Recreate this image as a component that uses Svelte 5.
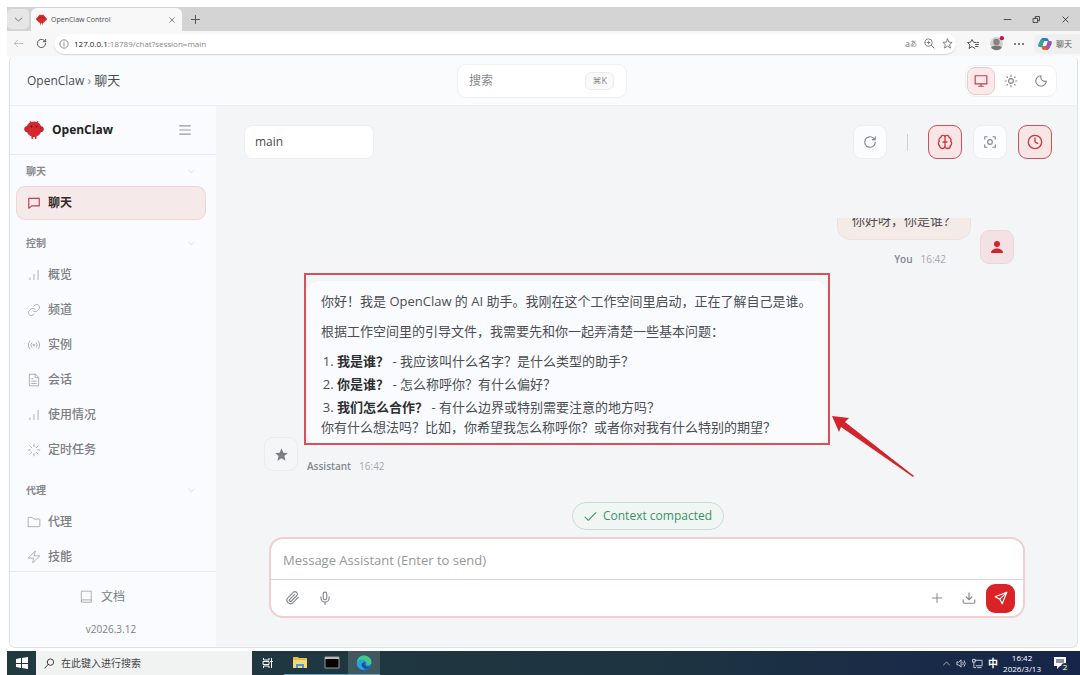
<script>
  let session = 'main'
  let draft = ''
  let address = '127.0.0.1:18789/chat?session=main'
  let theme = 'system'

  const icons = {
    chat: 'M3 4h18v13H8l-5 4z',
    bars: 'M5 20v-3M12 20v-9M19 20V4',
    link: 'M10 13a5 5 0 0 0 7.5.5l3-3a5 5 0 0 0-7-7l-1.800 1.700M14 11a5 5 0 0 0-7.500-.5l-3 3a5 5 0 0 0 7 7l1.700-1.700',
    radio: 'M5 19a10 10 0 0 1 0-14M19 5a10 10 0 0 1 0 14M8 16a6 6 0 0 1 0-8M16 8a6 6 0 0 1 0 8M10.500 12a1.500 1.500 0 1 0 3 0 1.500 1.500 0 1 0-3 0',
    file: 'M14 2H4v20h16V8zM14 2v6h6M8 10h2M8 14h8M8 18h8',
    loader: 'M12 2v4M12 18v4M2 12h4M18 12h4M5 5l3 3M16 16l3 3M5 19l3-3M16 8l3-3',
    folder: 'M2 19V5a1 1 0 0 1 1-1h6l3 3h9a1 1 0 0 1 1 1v11a1 1 0 0 1-1 1H3a1 1 0 0 1-1-1z',
    zap: 'M14 2 2 14h9l-1 8 12-12h-9z',
    book: 'M4 19V2h17v19H6a2 2 0 0 1 0-4h15',
    menu: 'M3 5h18M3 12h18M3 19h18',
    chevron: 'M3 8l9 8 9-8',
    monitor: 'M2 3h20v14H2zM8 21h8M12 17v4',
    sun: 'M8 12a4 4 0 1 0 8 0 4 4 0 1 0-8 0M12 2v2M12 20v2M2 12h2M20 12h2M5 5l1 1M18 18l1 1M5 19l1-1M18 6l1-1',
    moon: 'M12 3a7 7 0 0 0 9 9 9 9 0 1 1-9-9z',
    refresh: 'M21 12a9 9 0 1 1-3-6.700L21 8M21 3v5h-5',
    brain: 'M12 5a3 3 0 0 0-6 0 4 4 0 0 0-2.500 6 4 4 0 0 0 .5 6.500A4 4 0 0 0 12 18zM12 5a3 3 0 0 1 6 0 4 4 0 0 1 2.500 6 4 4 0 0 1-.5 6.500A4 4 0 0 1 12 18zM9 12h6',
    focus: 'M8 12a4 4 0 1 0 8 0 4 4 0 1 0-8 0M3 7V3h4M17 3h4v4M21 17v4h-4M7 21H3v-4',
    clock: 'M2 12a10 10 0 1 0 20 0 10 10 0 1 0-20 0M12 6v6l4 2',
    clip: 'M21 11l-9 9a6 6 0 0 1-8.500-8.500l9-9a4 4 0 0 1 5.700 5.700l-9 9a2 2 0 0 1-2.900-2.900l8.500-8.400',
    mic: 'M9 5a3 3 0 0 1 6 0v7a3 3 0 0 1-6 0zM5 10v2a7 7 0 0 0 14 0v-2M12 19v4',
    plus: 'M12 3v18M3 12h18',
    download: 'M2 15v4a2 2 0 0 0 2 2h16a2 2 0 0 0 2-2v-4M7 10l5 5 5-5M12 15V3',
    send: 'M22 2 2 10l8 4 4 8zM22 2 10 14',
    check: 'M2 13l6 6L22 5',
    close: 'M5 5l14 14M19 5 5 19',
    minimize: 'M3 12h18',
    restore: 'M4 9h11v11H4zM9 9V4h11v11h-5',
    back: 'M22 12H3M10 5l-7 7 7 7',
    info: 'M2 12a10 10 0 1 0 20 0 10 10 0 1 0-20 0M12 11v6M12 7v1',
    zoom: 'M2 10a8 8 0 1 0 16 0 8 8 0 1 0-16 0M16 16l6 6M7 10h6M10 7v6',
    star: 'M12 2l3 7 7 .6-5.400 4.800L18.500 22 12 17.800 5.500 22l1.900-7.600L2 9.600 9 9z',
    favorites: 'M16 21l-6-4-6 4 2-7-5-5 6-.5L10 3l3 5.500 5 .5M17 13h6M17 17h5M20 9h3',
    search: 'M7 9a7 7 0 1 0 14 0 7 7 0 1 0-14 0M9 14l-7 8',
    up: 'M4 16l8-8 8 8',
    sound: 'M2 9v6h4l5 5V4L6 9zM15 9a5 5 0 0 1 0 6M18 6a9 9 0 0 1 0 12',
    network: 'M7 5h15v12H9M12 21h8M2 3h5v6H2zM4 9v12h4',
    tasks: 'M3 3v3h11V3M3 21v-3h11v3M3 9h11v6H3zM19 3v4M19 11v10M17 9h4'
  }

  const groups = [
    { title: '聊天', items: [{ icon: 'chat', label: '聊天', active: true }] },
    {
      title: '控制',
      items: [
        { icon: 'bars', label: '概览' },
        { icon: 'link', label: '频道' },
        { icon: 'radio', label: '实例' },
        { icon: 'file', label: '会话' },
        { icon: 'bars', label: '使用情况' },
        { icon: 'loader', label: '定时任务' }
      ]
    },
    {
      title: '代理',
      items: [
        { icon: 'folder', label: '代理' },
        { icon: 'zap', label: '技能' }
      ]
    }
  ]

  const themes = [
    { id: 'system', icon: 'monitor' },
    { id: 'light', icon: 'sun' },
    { id: 'dark', icon: 'moon' }
  ]

  const questions = [
    { name: '我是谁？', text: '我应该叫什么名字？是什么类型的助手？' },
    { name: '你是谁？', text: '怎么称呼你？有什么偏好？' },
    { name: '我们怎么合作？', text: '有什么边界或特别需要注意的地方吗？' }
  ]
</script>

{#snippet icon(name, size = 14)}
  <svg class="icon" width={size} height={size} viewBox="0 0 24 24" aria-hidden="true"><path d={icons[name]} /></svg>
{/snippet}

{#snippet logo(size)}
  <svg width={size} height={size} viewBox="0 0 20 20" aria-hidden="true">
    <path d="M7 3 6 1M13 3l1-2" stroke="#a3343a" fill="none" />
    <path d="M10 1.500c5 0 7.500 3.500 7.500 7.500s-2.500 6.500-5 7.500v2.500H11v-2H9v2H7.500v-2.500c-2.500-1-5-3.500-5-7.500S5 1.500 10 1.500z" fill="#d6282e" />
    <path d="M4 6.500C1.500 5.500 0 7.500.2 9.500S2 12.500 4.500 12zM16 6.500c2.500-1 4 1 3.800 3S18 12.500 15.500 12z" fill="#c4262c" />
    <circle cx="7.500" cy="6.500" r="1" fill="#4a1a1e" />
    <circle cx="12.500" cy="6.500" r="1" fill="#4a1a1e" />
  </svg>
{/snippet}

<div class="desktop">
  <div class="tabs">
    <button class="tab-list" aria-label="tabs">{@render icon('chevron', 9)}</button>
    <div class="tab">
      {@render logo(11)}
      <span>OpenClaw Control</span>
      <button aria-label="close tab">{@render icon('close', 8)}</button>
    </div>
    <button class="new-tab" aria-label="new tab">{@render icon('plus', 11)}</button>
    <div class="window-buttons">
      <button aria-label="minimize">{@render icon('minimize', 9)}</button>
      <button aria-label="restore">{@render icon('restore', 9)}</button>
      <button aria-label="close">{@render icon('close', 9)}</button>
    </div>
  </div>

  <div class="toolbar">
    <button class="faded" aria-label="back">{@render icon('back', 11)}</button>
    <button aria-label="reload">{@render icon('refresh', 11)}</button>
    <div class="address">
      {@render icon('info', 10)}
      <div class="url" role="textbox" aria-label="address"><b>{address.slice(0, 9)}</b>{address.slice(9)}</div>
      <button class="translate" aria-label="translate">a<small>あ</small></button>
      <button aria-label="zoom">{@render icon('zoom', 11)}</button>
      <button aria-label="bookmark">{@render icon('star', 11)}</button>
    </div>
    <div class="extras">
      <button aria-label="favorites">{@render icon('favorites', 12)}</button>
      <button aria-label="profile">
        <svg width="15" height="15" viewBox="0 0 14 14">
          <circle cx="7" cy="7" r="6" fill="#d3d0d0" />
          <circle cx="7" cy="5.500" r="3" fill="#858282" />
          <path d="M2 11c1-3 9-3 10 0-2 3-8 3-10 0z" fill="#777" />
          <circle cx="12" cy="2" r="2" fill="#b51b3f" />
        </svg>
      </button>
      <button aria-label="more">
        <svg width="10" height="4" viewBox="0 0 10 4" fill="#555"><circle cx="1" cy="2" r="1" /><circle cx="5" cy="2" r="1" /><circle cx="9" cy="2" r="1" /></svg>
      </button>
      <button class="copilot">
        <svg width="14" height="14" viewBox="0 0 14 14">
          <path d="M4 1h4c2 0 2 1 3 3H6L4 10H2C0 10 0 8 1 6z" fill="#2d78d5" />
          <path d="M1 6l2-4 3 1-2 7H2C0 10 0 8 1 6z" fill="#31a98c" />
          <path d="M10 13H6c-2 0-2-2-3-4h5l2-5h2c2 0 2 2 1 4z" fill="#e2633f" />
          <path d="M10 4h2c2 0 2 2 1 4l-2 4-3-1z" fill="#9a55bf" />
          <path d="M6 5h3L8 9H5z" fill="#fff" />
        </svg>
        聊天
      </button>
    </div>
  </div>

  <div class="app">
    <header>
      <div class="crumbs">OpenClaw <i>›</i> <span>聊天</span></div>
      <button class="search">搜索 <kbd>⌘K</kbd></button>
      <div class="themes">
        {#each themes as t (t.id)}
          <button class:active={theme === t.id} aria-label={t.id} on:click={() => (theme = t.id)}>
            {@render icon(t.icon)}
          </button>
        {/each}
      </div>
    </header>

    <div class="body">
      <aside>
        <div class="brand">
          {@render logo(20)}
          <strong>OpenClaw</strong>
          <button aria-label="menu">{@render icon('menu')}</button>
        </div>
        <nav>
          {#each groups as group}
            <section>
              <button class="group-title">{group.title} {@render icon('chevron', 7)}</button>
              {#each group.items as item}
                <a href="#{item.label}" class:active={item.active}>{@render icon(item.icon)} {item.label}</a>
              {/each}
            </section>
          {/each}
        </nav>
        <div class="side-foot">
          <a href="#docs">{@render icon('book')} 文档</a>
          <span>v2026.3.12</span>
        </div>
      </aside>

      <main>
        <div class="controls">
          <select bind:value={session} aria-label="session">
            <option value="main">main</option>
          </select>
          <button class="tool" aria-label="refresh">{@render icon('refresh')}</button>
          <span class="divider"></span>
          <button class="tool on" aria-label="thinking">{@render icon('brain', 16)}</button>
          <button class="tool" aria-label="focus">{@render icon('focus')}</button>
          <button class="tool on" aria-label="history">{@render icon('clock', 16)}</button>
        </div>

        <div class="thread">
          <div class="message you">
            <div class="stack">
              <div class="bubble">你好呀，你是谁？</div>
              <div class="meta"><b>You</b> 16:42</div>
            </div>
            <div class="avatar">
              <svg width="14" height="14" viewBox="0 0 14 14"><circle cx="7" cy="4" r="3" /><path d="M1 13c0-6 12-6 12 0z" /></svg>
            </div>
          </div>

          <div class="message">
            <div class="avatar">
              <svg width="15" height="15" viewBox="0 0 24 24"><path d={icons.star} /></svg>
            </div>
            <div class="stack">
              <div class="bubble">
                <p>你好！我是 OpenClaw 的 AI 助手。我刚在这个工作空间里启动，正在了解自己是谁。</p>
                <p>根据工作空间里的引导文件，我需要先和你一起弄清楚一些基本问题：</p>
                <ol>
                  {#each questions as q}
                    <li><strong>{q.name}</strong> - {q.text}</li>
                  {/each}
                </ol>
                <div>你有什么想法吗？比如，你希望我怎么称呼你？或者你对我有什么特别的期望？</div>
                <div class="marker"></div>
                <svg class="arrow" width="84" height="62" viewBox="0 0 84 62">
                  <path d="M1 1l17 2-4 4 69 54-1 1L10 12l-2 5z" fill="#d3242c" />
                </svg>
              </div>
              <div class="meta"><b>Assistant</b> 16:42</div>
            </div>
          </div>
        </div>

        <div class="notice">{@render icon('check', 13)} Context compacted</div>

        <form class="composer" on:submit|preventDefault>
          <input bind:value={draft} placeholder="Message Assistant (Enter to send)" aria-label="message" />
          <div class="actions">
            <button type="button" aria-label="attach">{@render icon('clip')}</button>
            <button type="button" aria-label="voice">{@render icon('mic')}</button>
            <span></span>
            <button type="button" aria-label="new">{@render icon('plus', 12)}</button>
            <button type="button" aria-label="export">{@render icon('download')}</button>
            <button class="send" aria-label="send">{@render icon('send')}</button>
          </div>
        </form>
      </main>
    </div>
  </div>

  <footer>
    <button class="start" aria-label="start">
      <svg width="12" height="12" viewBox="0 0 12 12"><path d="M0 2l5-1v5H0zM6 1l6-1v6H6zM0 7h5v4l-5-1zM6 7h6v5l-6-1z" fill="#fff" /></svg>
    </button>
    <label class="task-search">{@render icon('search', 11)}<input placeholder="在此键入进行搜索" /></label>
    <button aria-label="task view">{@render icon('tasks', 12)}</button>
    <button class="open" aria-label="files">
      <svg width="16" height="13" viewBox="0 0 16 13"><path d="M1 1h5l1 1h8v10H1z" fill="#e9b949" /><path d="M1 4h14v8H1z" fill="#f8d775" /><path d="M4 12V8h8v4h-2v-2H6v2z" fill="#4b9bd0" /></svg>
    </button>
    <button class="open" aria-label="terminal">
      <svg width="16" height="13" viewBox="0 0 16 13"><path d="M1 1h14v11H1z" fill="#050505" stroke="#999" /><path d="M1 1h14v2H1z" fill="#bbb" /></svg>
    </button>
    <button class="open current" aria-label="edge">
      <svg width="16" height="16" viewBox="0 0 16 16">
        <circle cx="8" cy="8" r="7.500" fill="#1878c9" />
        <path d="M1 7C2-2 15-1 15.500 7c0 3-3 4-5.500 3 1-3-1-5-4-5-2 0-4 1-5 2z" fill="#43c78d" />
        <path d="M1 7c2-3 7-3 8 0-3 0-4 4 0 7-4 2-9-2-8-7z" fill="#2aa2dc" />
        <path d="M9 7c-2 2 0 5 4 5l1 0c-2 3-7 2-8-1-1-2 1-4 3-4z" fill="#11509b" />
      </svg>
    </button>
    <div class="tray">
      {@render icon('up', 9)}
      {@render icon('sound', 11)}
      {@render icon('network', 11)}
      <span class="ime">中</span>
      <time>16:42<br />2026/3/13</time>
      <svg width="16" height="15" viewBox="0 0 16 15">
        <path d="M1 1h12v9H7l-3 3v-3H1z" fill="#fff" />
        <path d="M3 4h8M3 6h8" stroke="#1a2942" />
        <circle cx="12" cy="11" r="4" fill="#26344a" />
        <text x="12" y="14" text-anchor="middle" font-size="8" fill="#fff">2</text>
      </svg>
    </div>
  </footer>
</div>

<style>
  :global(body) {
    margin: 0;
    background: #fff;
  }

  .desktop {
    box-sizing: border-box;
    display: flex;
    flex-direction: column;
    height: 100vh;
    padding: 7px 0 0 7px;
    overflow: hidden;
    font: 12px/20px 'Open Sans', 'Noto Sans CJK SC', sans-serif;
    color: #4a4d52;
  }

  .desktop * {
    box-sizing: border-box;
  }

  button,
  input,
  select {
    margin: 0;
    padding: 0;
    border: 0;
    background: none;
    color: inherit;
    font: inherit;
  }

  button {
    display: flex;
    align-items: center;
    justify-content: center;
  }

  a {
    color: inherit;
    text-decoration: none;
  }

  svg {
    flex: none;
  }

  .icon {
    fill: none;
    stroke: currentColor;
    stroke-width: 2;
    stroke-linecap: round;
    stroke-linejoin: round;
  }

  /* browser chrome */
  .tabs {
    display: flex;
    flex: none;
    height: 24px;
    background: #d4d4d4;
  }

  .tab-list {
    width: 22px;
    margin: 2px 2px 2px 0;
    border-radius: 5px;
    background: #e6e6e6;
  }

  .tab {
    display: flex;
    align-items: center;
    gap: 4px;
    width: 151px;
    margin-top: 1px;
    padding: 0 6px 0 5px;
    border-radius: 6px 6px 0 0;
    background: #f8f8f8;
    font-size: 7px;
  }

  .tab button {
    margin-left: auto;
  }

  .new-tab {
    width: 26px;
  }

  .window-buttons {
    display: flex;
    margin-left: auto;
    color: #222;
  }

  .window-buttons button {
    width: 29px;
  }

  .toolbar {
    display: flex;
    flex: none;
    align-items: center;
    height: 25px;
    background: #f7f7f7;
  }

  .toolbar > button {
    width: 23px;
  }

  .toolbar .faded {
    color: #bbb;
  }

  .address {
    display: flex;
    flex: 1;
    align-items: center;
    gap: 7px;
    height: 20px;
    margin-left: 1px;
    padding: 0 3px 0 5px;
    border-radius: 10px;
    background: #fff;
    box-shadow: 0 1px 1px #d5d5d5;
    color: #777;
  }

  .url {
    flex: 1;
    margin-left: -2px;
    font-size: 8px;
    color: #888;
  }

  .url b {
    font-weight: 400;
    color: #222;
  }

  .translate {
    font-size: 9px;
  }

  .translate small {
    font-size: 7px;
  }

  .extras {
    display: flex;
    align-items: center;
    gap: 10px;
    padding-left: 11px;
    color: #555;
  }

  .copilot {
    gap: 4px;
    height: 20px;
    padding: 0 8px 0 4px;
    border-radius: 6px 0 0 6px;
    background: #efefef;
    font-size: 8px;
  }

  /* page */
  .app {
    display: flex;
    flex: 1;
    flex-direction: column;
    min-height: 0;
    margin: 0 2px 3px;
    border: 1px solid #dfe2e5;
    border-top: 0;
    border-radius: 6px;
    background: #f3f5f7;
    overflow: hidden;
  }

  header {
    display: grid;
    grid-template-columns: 1fr 170px 1fr;
    flex: none;
    align-items: center;
    height: 50px;
    padding: 0 20px 0 17px;
    border-bottom: 1px solid #eceef0;
    background: #fafbfd;
  }

  .crumbs i {
    font-style: normal;
    color: #888;
  }

  .crumbs span {
    font-size: 13px;
  }

  .search {
    justify-content: space-between;
    height: 34px;
    padding: 0 12px 0 11px;
    border: 1px solid #eff0f2;
    border-radius: 9px;
    background: #fff;
    color: #85888c;
  }

  kbd {
    padding: 0 6px;
    border: 1px solid #ececee;
    border-radius: 6px;
    background: #fafafa;
    font: 9px/16px 'Open Sans', 'DejaVu Sans', sans-serif;
  }

  .themes {
    display: flex;
    gap: 2px;
    justify-self: end;
    padding: 1px;
    border: 1px solid #f0f0f2;
    border-radius: 10px;
    background: #fff;
    color: #85888c;
  }

  .themes button {
    width: 28px;
    height: 28px;
    border: 1px solid transparent;
    border-radius: 8px;
  }

  .themes .active {
    border-color: #f0c8ca;
    background: #fce9ea;
    color: #c0414b;
  }

  .body {
    display: flex;
    flex: 1;
    min-height: 0;
  }

  aside {
    display: flex;
    flex: none;
    flex-direction: column;
    width: 206px;
    background: #fafbfe;
  }

  .brand {
    display: flex;
    flex: none;
    align-items: center;
    gap: 8px;
    height: 49px;
    padding: 0 24px 0 14px;
    border-bottom: 1px solid #e9ebee;
    color: #222;
  }

  .brand button {
    margin-left: auto;
    color: #96999d;
  }

  nav {
    flex: 1;
    min-height: 0;
    padding: 2px 10px 0 6px;
    overflow: hidden;
  }

  section {
    display: flex;
    flex-direction: column;
    gap: 1px;
    margin-bottom: 9px;
  }

  .group-title {
    justify-content: space-between;
    height: 28px;
    padding: 0 11px 0 10px;
    font-size: 10px;
    font-weight: 600;
    color: #85888c;
  }

  .group-title .icon {
    color: #b5b8bc;
  }

  nav a {
    display: flex;
    align-items: center;
    gap: 7px;
    height: 34px;
    padding: 0 10px;
    border: 1px solid transparent;
    border-radius: 9px;
    font-weight: 500;
    color: #7b7e83;
  }

  nav .icon {
    color: #a3a6aa;
    stroke-width: 1.5;
  }

  nav .active {
    border-color: #f2d4d6;
    background: #f6e9ea;
    font-weight: 700;
    color: #33282b;
  }

  nav .active .icon {
    color: #c0414b;
    stroke-width: 2;
  }

  .side-foot {
    display: flex;
    flex: none;
    flex-direction: column;
    align-items: center;
    gap: 12px;
    height: 76px;
    padding: 15px 4px 0 0;
    border-top: 1px solid #e9ebee;
    color: #7b7e83;
    font-size: 10px;
  }

  .side-foot a {
    display: flex;
    align-items: center;
    gap: 8px;
    padding-right: 18px;
    font-size: 12px;
  }

  .side-foot .icon {
    stroke-width: 1;
  }

  main {
    display: flex;
    flex: 1;
    flex-direction: column;
    min-width: 0;
    padding: 19px 25px 29px 28px;
  }

  .controls {
    display: flex;
    flex: none;
    align-items: center;
    gap: 11px;
  }

  select {
    width: 130px;
    height: 34px;
    margin-right: auto;
    padding: 0 10px;
    border: 1px solid #eceef0;
    border-radius: 8px;
    background: #fff;
    appearance: none;
  }

  .tool {
    width: 34px;
    height: 34px;
    border: 1px solid #eceef0;
    border-radius: 9px;
    background: #fbfcfd;
    color: #85888c;
  }

  .tool.on {
    border-color: #cf5159;
    background: #f8e6e6;
    color: #c93740;
  }

  .divider {
    width: 1px;
    height: 17px;
    margin: 0 9px;
    background: #d0d2d5;
  }

  .thread {
    display: flex;
    flex: 1;
    flex-direction: column;
    gap: 13px;
    justify-content: flex-end;
    min-height: 0;
    margin-top: 59px;
    padding: 0 38px 27px 20px;
    overflow: hidden;
  }

  .message {
    display: flex;
    align-items: flex-end;
    gap: 9px;
  }

  .you {
    justify-content: flex-end;
  }

  .stack {
    display: flex;
    flex-direction: column;
    gap: 12px;
    align-items: flex-start;
  }

  .you .stack {
    gap: 10px;
    align-items: flex-end;
  }

  .bubble {
    position: relative;
    padding: 10px 16px 8px 14px;
    border-radius: 13px;
    background: #fafbfe;
    font-size: 13px;
  }

  .you .bubble {
    padding: 9px 14px;
    border: 1px solid #f2dfdd;
    background: #f5ebe6;
  }

  .bubble p,
  .bubble ol {
    margin: 0;
  }

  .bubble p {
    margin-bottom: 10px;
  }

  .bubble ol {
    display: grid;
    gap: 3px;
    padding-left: 16px;
  }

  .bubble strong {
    color: #2c2e32;
  }

  .marker {
    position: absolute;
    inset: -8px -3px 0 -3px;
    border: 2px solid #d9505c;
  }

  .arrow {
    position: absolute;
    right: -88px;
    bottom: -32px;
  }

  .meta {
    display: flex;
    gap: 8px;
    font-size: 10px;
    line-height: 18px;
    color: #a6a9ad;
  }

  .you .meta {
    padding-right: 25px;
  }

  .meta b {
    font-weight: 600;
    color: #85888c;
  }

  .avatar {
    display: flex;
    flex: none;
    align-items: center;
    justify-content: center;
    width: 34px;
    height: 34px;
    margin-bottom: 4px;
    border: 1px solid #eaecee;
    border-radius: 9px;
    background: #f5f6f8;
    fill: #7b7e83;
  }

  .you .avatar {
    border-color: #efd5d8;
    background: #f3e2e5;
    fill: #d3242c;
  }

  .notice {
    display: flex;
    align-items: center;
    align-self: center;
    gap: 6px;
    height: 28px;
    margin-bottom: 7px;
    padding: 0 11px;
    border: 1px solid #c9dfd3;
    border-radius: 14px;
    background: #eff6f3;
    color: #3d9265;
  }

  .composer {
    flex: none;
    margin: 0 27px 0 25px;
    border: 2px solid #f0cfd0;
    border-radius: 14px;
    background: #fff;
  }

  .composer input {
    display: block;
    width: 100%;
    height: 41px;
    padding: 2px 12px 0;
    border-bottom: 1px solid #e6cfcf;
    outline: none;
    font-size: 13px;
  }

  input::placeholder {
    color: #94979b;
    opacity: 1;
  }

  .actions {
    display: flex;
    align-items: center;
    gap: 3px;
    height: 36px;
    padding: 0 8px 0 7px;
    color: #85888c;
  }

  .actions span {
    flex: 1;
  }

  .actions button {
    width: 29px;
    height: 29px;
  }

  .actions .send {
    border-radius: 9px;
    background: #db2327;
    color: #fff;
  }

  /* taskbar */
  footer {
    display: flex;
    flex: none;
    height: 24px;
    background: linear-gradient(90deg, #203a40, #1e3441 60%, #16254a);
    color: #fff;
  }

  footer button {
    width: 32px;
  }

  footer .start {
    width: 29px;
  }

  .task-search {
    display: flex;
    align-items: center;
    gap: 6px;
    width: 216px;
    padding: 0 8px;
    background: #f1f2f2;
    color: #333;
    font-size: 10px;
  }

  .task-search input {
    flex: 1;
    min-width: 0;
  }

  .task-search input::placeholder {
    color: #444;
  }

  .open {
    border-bottom: 1px solid #6fa3bd;
  }

  .current {
    background: #41585f;
  }

  .tray {
    display: flex;
    align-items: center;
    gap: 5px;
    margin-left: auto;
    padding-right: 11px;
  }

  .tray .icon {
    color: #cdd4de;
  }

  .ime {
    font-size: 10px;
    font-weight: 700;
  }

  time {
    margin-right: 7px;
    font-size: 8px;
    line-height: 11px;
    text-align: center;
  }
</style>
